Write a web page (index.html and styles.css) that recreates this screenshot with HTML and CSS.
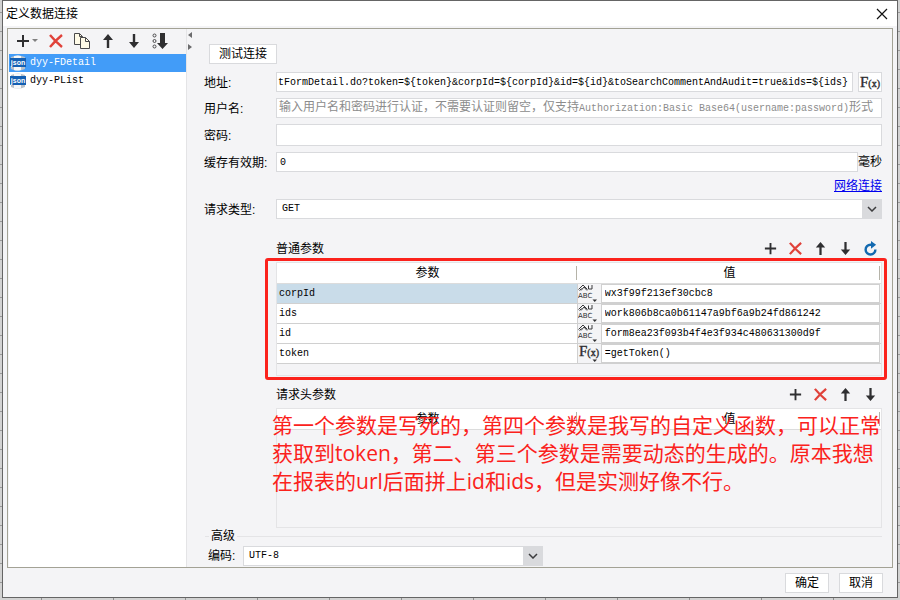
FILE: index.html
```html
<!DOCTYPE html>
<html lang="zh-CN">
<head>
<meta charset="utf-8">
<title>定义数据连接</title>
<link rel="stylesheet" href="styles.css">
</head>
<body>
<svg class="defs" aria-hidden="true">
  <symbol id="plus" viewBox="0 0 16 16"><path d="M8 2v12M2 8h12" fill="none" stroke="#2f2f31" stroke-width="2"/></symbol>
  <symbol id="cross" viewBox="0 0 16 16"><path d="M2 2q5 6 12 12M14 2Q8 7 2 14" fill="none" stroke="#e0423a" stroke-width="2.4"/></symbol>
  <symbol id="up" viewBox="0 0 16 16"><path d="M8 1l5 6H9.2v8H6.8V7H3z" fill="#2f2f31"/></symbol>
  <symbol id="down" viewBox="0 0 16 16"><path d="M8 15l5-6H9.2V1H6.8v8H3z" fill="#2f2f31"/></symbol>
  <symbol id="copy" viewBox="0 0 16 16"><g fill="#fffbe8" stroke="#4a4a4c"><path d="M.5.5h5l3 3v8h-8z"/><path d="M5.500 .5v3h3" fill="none"/><path d="M6.500 4.500h5l4 4v7h-9z"/><path d="M11.500 4.500v4h4" fill="none"/></g></symbol>
  <symbol id="sort" viewBox="0 0 16 16"><g fill="none" stroke="#4a4a4c"><circle cx="2.500" cy="2.500" r="1.500"/><circle cx="2.500" cy="8" r="1.500"/><circle cx="2.500" cy="13.500" r="1.500"/></g><path d="M8 0h5v10h3l-5.500 6L5 10h3z" fill="#2f2f31"/></symbol>
  <symbol id="refresh" viewBox="0 0 16 16"><path d="M13.200 9A5.200 5.200 0 1 1 8 4h2" fill="none" stroke="#1269b0" stroke-width="2.600"/><path d="M8.500 0l5.500 4-5.500 4.200z" fill="#1269b0"/></symbol>
  <symbol id="chevron" viewBox="0 0 10 6"><path d="M1 1l4 4 4-4" fill="none" stroke="#3c3c3e" stroke-width="1.500"/></symbol>
  <symbol id="db" viewBox="0 0 16 16"><path d="M1 2q7-3 14 0v12q-7 3-14 0z" fill="#b9c0c8"/><path d="M4 1q4-1 7 0v14q-4 1-7 0z" fill="#f5f7f9"/><path d="M0 3h16v9H0z" fill="#1460b4"/><text x="8" y="10" text-anchor="middle" class="json-text">json</text></symbol>
  <symbol id="abc" viewBox="0 0 24 18"><path d="M.5 5.500L5 1l4.500 4.500M3 6.500L6 3l3 3.500M1.500 6.500l2-2M10.500 1.500v3.500h3.500V1" fill="none" stroke="#3a3a3c"/><text x="0" y="14" class="abc-text">ABC</text><path d="M14.500 15.500h4.500l-2.250 2.500z" fill="#2f2f31"/></symbol>
  <symbol id="fx" viewBox="0 0 24 18"><text x="1" y="12" class="fx-text">F<tspan class="fx-small">(x)</tspan></text><path d="M14.500 15.500h4.500l-2.250 2.500z" fill="#2f2f31"/></symbol>
</svg>

<main class="dialog">
  <header class="title-bar">
    <h1>定义数据连接</h1>
    <button class="close" aria-label="关闭"><svg viewBox="0 0 10 10"><path d="M0 0l10 10M10 0L0 10" stroke="#111" stroke-width="1.200"/></svg></button>
  </header>

  <div class="panel">
    <aside class="sidebar">
      <div class="toolbar">
        <button class="tool add" aria-label="添加"><svg class="icon"><use href="#plus"/></svg><span class="caret"></span></button>
        <button class="tool" aria-label="删除"><svg class="icon"><use href="#cross"/></svg></button>
        <button class="tool" aria-label="复制"><svg class="icon"><use href="#copy"/></svg></button>
        <button class="tool" aria-label="上移"><svg class="icon"><use href="#up"/></svg></button>
        <button class="tool" aria-label="下移"><svg class="icon"><use href="#down"/></svg></button>
        <button class="tool" aria-label="排序"><svg class="icon"><use href="#sort"/></svg></button>
      </div>
      <ul class="connections">
        <li class="selected"><svg class="icon"><use href="#db"/></svg><span>dyy-FDetail</span></li>
        <li><svg class="icon"><use href="#db"/></svg><span>dyy-PList</span></li>
      </ul>
    </aside>
    <div class="splitter"><svg viewBox="0 0 4 20"><path d="M4 1v6L0 4zM0 13v6l4-3z" fill="#6b6b6d"/></svg></div>

    <form class="settings">
      <div class="row test-row"><button type="button" class="button">测试连接</button></div>
      <div class="row">
        <label for="url">地址:</label>
        <input id="url" class="field url code" value="tFormDetail.do?token=${token}&amp;corpId=${corpId}&amp;id=${id}&amp;toSearchCommentAndAudit=true&amp;ids=${ids}">
        <button type="button" class="fx-button" aria-label="公式">F<span>(x)</span></button>
      </div>
      <div class="row">
        <label for="user">用户名:</label>
        <div class="hinted">
          <input id="user" class="field">
          <span class="hint">输入用户名和密码进行认证，不需要认证则留空，仅支持<span class="code">Authorization:Basic Base64(username:password)</span>形式</span>
        </div>
      </div>
      <div class="row">
        <label for="pass">密码:</label>
        <input id="pass" class="field tall" type="password">
      </div>
      <div class="row">
        <label for="ttl">缓存有效期:</label>
        <input id="ttl" class="field code" value="0"><span>毫秒</span>
      </div>
      <div class="row link-row"><a href="#">网络连接</a></div>
      <div class="row">
        <label for="method">请求类型:</label>
        <div class="select"><select id="method" class="field code"><option>GET</option></select><svg><use href="#chevron"/></svg></div>
      </div>

      <section class="params">
        <div class="section-head">
          <h2>普通参数</h2>
          <button type="button" class="tool" aria-label="添加参数"><svg class="icon small"><use href="#plus"/></svg></button>
          <button type="button" class="tool" aria-label="删除参数"><svg class="icon small"><use href="#cross"/></svg></button>
          <button type="button" class="tool" aria-label="上移参数"><svg class="icon small"><use href="#up"/></svg></button>
          <button type="button" class="tool" aria-label="下移参数"><svg class="icon small"><use href="#down"/></svg></button>
          <button type="button" class="tool" aria-label="刷新"><svg class="icon small"><use href="#refresh"/></svg></button>
        </div>
        <div class="table-box marked">
          <table>
            <colgroup><col class="name-col"><col class="type-col"><col></colgroup>
            <thead><tr><th>参数</th><th colspan="2">值</th></tr></thead>
            <tbody>
              <tr class="selected"><td>corpId</td><td class="type"><button type="button" aria-label="字符串"><svg><use href="#abc"/></svg></button></td><td class="value"><input aria-label="corpId" value="wx3f99f213ef30cbc8"></td></tr>
              <tr><td>ids</td><td class="type"><button type="button" aria-label="字符串"><svg><use href="#abc"/></svg></button></td><td class="value"><input aria-label="ids" value="work806b8ca0b61147a9bf6a9b24fd861242"></td></tr>
              <tr><td>id</td><td class="type"><button type="button" aria-label="字符串"><svg><use href="#abc"/></svg></button></td><td class="value"><input aria-label="id" value="form8ea23f093b4f4e3f934c480631300d9f"></td></tr>
              <tr><td>token</td><td class="type"><button type="button" aria-label="公式"><svg><use href="#fx"/></svg></button></td><td class="value"><input aria-label="token" value="=getToken()"></td></tr>
            </tbody>
          </table>
        </div>
      </section>

      <section class="params headers">
        <div class="section-head">
          <h2>请求头参数</h2>
          <button type="button" class="tool" aria-label="添加请求头"><svg class="icon small"><use href="#plus"/></svg></button>
          <button type="button" class="tool" aria-label="删除请求头"><svg class="icon small"><use href="#cross"/></svg></button>
          <button type="button" class="tool" aria-label="上移请求头"><svg class="icon small"><use href="#up"/></svg></button>
          <button type="button" class="tool" aria-label="下移请求头"><svg class="icon small"><use href="#down"/></svg></button>
        </div>
        <div class="table-box">
          <table>
            <colgroup><col class="name-col"><col class="type-col"><col></colgroup>
            <thead><tr><th>参数</th><th colspan="2">值</th></tr></thead>
          </table>
          <p class="note">第一个参数是写死的，第四个参数是我写的自定义函数，可以正常<br>获取到token，第二、第三个参数是需要动态的生成的。原本我想<br>在报表的url后面拼上id和ids，但是实测好像不行。</p>
        </div>
      </section>

      <fieldset class="advanced">
        <legend>高级</legend>
        <label for="encoding">编码:</label>
        <div class="select"><select id="encoding" class="field code"><option>UTF-8</option></select><svg><use href="#chevron"/></svg></div>
      </fieldset>
    </form>
  </div>

  <footer class="actions">
    <button class="button">确定</button>
    <button class="button">取消</button>
  </footer>
</main>
</body>
</html>
```
FILE: styles.css
```css
* { box-sizing: border-box; }

body {
  margin: 0;
  min-height: 100vh;
  padding: 0 2px 2px;
  display: flex;
  background-color: #d2d2d2;
  background-image:
    repeating-linear-gradient(to right, transparent 0 41px, #8f8f8f 41px 42px, transparent 42px 72px),
    repeating-linear-gradient(to bottom, transparent 0 12px, #999 12px 13px, transparent 13px 19px);
  color: #000;
  font: 12px/16px "Liberation Sans", "Noto Sans CJK SC", sans-serif;
}

button, input, select {
  margin: 0;
  padding: 0;
  border: 0;
  border-radius: 0;
  background: none;
  color: inherit;
  font: inherit;
}

h1, h2 { margin: 0; font-size: 12px; font-weight: 400; }

.defs { position: absolute; width: 0; height: 0; }

.dialog {
  flex: 1;
  display: flex;
  flex-direction: column;
  min-width: 0;
  border: 1px solid #656565;
  background: #f4f4f6;
}

.title-bar {
  display: flex;
  align-items: center;
  justify-content: space-between;
  height: 25px;
  padding: 0 10px 0 3px;
  background: #fff;
}
.close { display: flex; }
.close svg { width: 10px; height: 10px; overflow: visible; }

.panel {
  flex: 1;
  display: flex;
  margin: 2px 4px 0;
  border: 1px solid #a3a295;
}

.sidebar {
  display: flex;
  flex-direction: column;
  width: 179px;
  padding-left: 1px;
  border-right: 1px solid #e4e4e6;
}
.toolbar {
  display: flex;
  align-items: center;
  gap: 10px;
  height: 25px;
  padding: 0 0 2px 6px;
}
.tool { display: flex; align-items: center; }
.tool.add { gap: 1px; }
.caret {
  border: 3px solid transparent;
  border-top-color: #808080;
  border-bottom: 0;
}
.icon { display: block; width: 16px; height: 16px; flex: none; }
.icon.small { width: 15px; height: 15px; }

.connections {
  flex: 1;
  margin: 0;
  padding: 0;
  list-style: none;
  background: #fff;
}
.connections li {
  display: flex;
  align-items: center;
  gap: 4px;
  height: 18px;
  padding-left: 1px;
}
.connections .selected { background: #429cf8; color: #fff; }
.connections span, .code, td, td input {
  font-family: "Liberation Mono", "Noto Sans CJK SC", monospace;
  font-size: 10px;
}
.json-text { font: bold 7px "Liberation Sans", sans-serif; fill: #fff; }
.abc-text { font: 7px "DejaVu Sans", sans-serif; fill: #2f2f31; }
.fx-text { font: 15px "Liberation Serif", serif; fill: #2f2f31; stroke: #2f2f31; stroke-width: .4px; }
.fx-small { font-size: 10px; }

.splitter { width: 5px; padding: 2px 0 0 1px; }
.splitter svg { display: block; width: 4px; height: 20px; }

.settings {
  flex: 1;
  display: flex;
  flex-direction: column;
  min-width: 0;
  padding: 15px 10px 1px 11px;
}
.row { display: flex; align-items: center; margin-bottom: 6px; }
.row > label { flex: none; width: 73px; padding: 2px 0 0 1px; }
.test-row { margin-bottom: 8px; padding-left: 6px; }
.link-row { height: 15px; justify-content: flex-end; }
a { color: #00e; }

.button {
  height: 20px;
  padding: 0 9px;
  border: 1px solid #d9dadd;
  background: #fff;
  line-height: 18px;
}

.field {
  flex: 1;
  display: block;
  width: 100%;
  min-width: 0;
  height: 20px;
  padding: 0 3px;
  border: 1px solid #d9dadd;
  background: #fff;
}
.field.tall { height: 22px; }
.field.url { padding: 0 1px; }

.fx-button {
  width: 24px;
  height: 20px;
  margin-left: 5px;
  border: 1px solid #d9dadd;
  background: #fff;
  color: #2f2f31;
  font: 15px/18px "Liberation Serif", serif;
  -webkit-text-stroke: .4px #2f2f31;
}
.fx-button span { font-size: 10px; }

.hinted { flex: 1; display: grid; min-width: 0; }
.hinted > * { grid-area: 1 / 1; }
.hint {
  padding: 0 3px;
  overflow: hidden;
  color: #8c8c8c;
  line-height: 18px;
  white-space: nowrap;
  pointer-events: none;
}

.select { position: relative; flex: 1; }
.select select { appearance: none; padding: 0 24px 0 5px; }
.select svg {
  position: absolute;
  top: 0;
  right: 0;
  width: 20px;
  height: 20px;
  padding: 7px 5px;
  background: #d9dadd;
  pointer-events: none;
}

.params { padding-left: 73px; }
.section-head {
  display: flex;
  align-items: center;
  gap: 10px;
  height: 20px;
  margin: 13px 4px 4px 0;
}
.headers .section-head { margin-top: 8px; }
.section-head h2 { flex: 1; padding-top: 2px; }

.table-box {
  position: relative;
  min-height: 114px;
  border: 1px solid #e4e4e6;
}
.marked::after {
  content: "";
  position: absolute;
  inset: -5px -6px -5px -12px;
  border: 3px solid #fb221c;
  border-radius: 3px;
  pointer-events: none;
}
table { width: 100%; border-collapse: collapse; table-layout: fixed; }
.name-col { width: 49.8%; }
.type-col { width: 23px; }
th {
  position: relative;
  height: 20px;
  padding: 2px 0 0;
  border-bottom: 1px solid #dcdcdc;
  background: #fff;
  font-weight: 400;
  line-height: 17px;
}
th::after {
  content: "";
  position: absolute;
  top: 3px;
  right: 1px;
  width: 1px;
  height: 14px;
  background: #b5b3a8;
}
td {
  height: 20px;
  padding: 1px 2px 0;
  border-bottom: 1px solid #d0d0d0;
  background: #fff;
  line-height: 18px;
}
.selected td { background: #c9dce9; }
td.type, .selected td.type { padding: 0; border-left: 1px solid #d0d0d0; background: #f4f4f6; }
td.type button { display: block; width: 22px; height: 19px; overflow: hidden; }
td.type svg { display: block; width: 24px; height: 18px; }
td.value, .selected td.value { padding: 0; background: #f4f4f6; }
td.value input {
  display: block;
  width: calc(100% - 1px);
  height: 19px;
  padding: 0 3px;
  border: 1px solid #d0d0d0;
  background: #fff;
}

.headers { flex: 1; display: flex; flex-direction: column; }
.headers .table-box { flex: 1; }
.note {
  position: absolute;
  top: 2px;
  left: -5px;
  margin: 0;
  color: #fb221c;
  font: 21px/28px "Open Sans", "Noto Sans CJK SC", sans-serif;
  white-space: nowrap;
}

.advanced {
  display: flex;
  align-items: center;
  min-width: 0;
  margin: 0 0 0 2px;
  padding: 2px 3px 0;
  border: 0 solid #e4e4e6;
  border-top-width: 1px;
}
.advanced legend { margin-left: 1px; padding: 0 2px; }
.advanced label { width: 35px; }
.advanced .select { flex: 0 1 300px; }

.actions {
  display: flex;
  justify-content: flex-end;
  gap: 10px;
  padding: 5px 14px 4px;
}
```
